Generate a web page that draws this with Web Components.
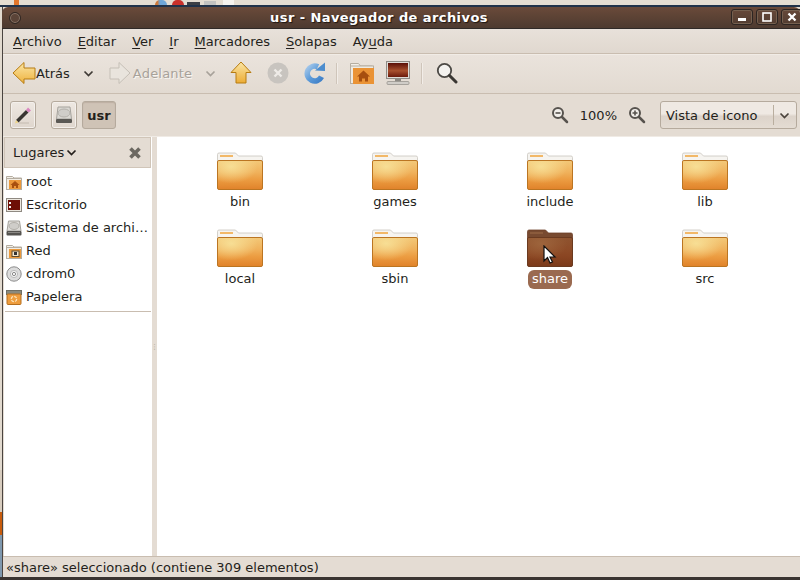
<!DOCTYPE html>
<html><head><meta charset="utf-8">
<style>
html,body{margin:0;padding:0;width:800px;height:580px;overflow:hidden;background:#e6ded6;font-family:"DejaVu Sans",sans-serif;font-size:13px;color:#241f1b}
</style></head><body>
<nau-app></nau-app>
<script>
const FOLDER=(sel)=>{
 const a=sel?['#8f5430','#8e4c28','#8a4522','#7a3a1a','#6a3a20']:['#f3c878','#f0b25c','#ec9d42','#e0822a','#bb7522'];
 const id=sel?'s':'n';
 return `<svg width="46" height="38" viewBox="0 0 46 38"><defs><linearGradient id="g${id}" x1="0" y1="0" x2="0" y2="1"><stop offset="0" stop-color="${a[0]}"/><stop offset=".4" stop-color="${a[1]}"/><stop offset=".65" stop-color="${a[2]}"/><stop offset="1" stop-color="${a[3]}"/></linearGradient><radialGradient id="h${id}" cx=".3" cy=".2" r=".6"><stop offset="0" stop-color="${sel?'#a0683f':'#f8e49c'}" stop-opacity=".85"/><stop offset="1" stop-color="${sel?'#a0683f':'#f8e49c'}" stop-opacity="0"/></radialGradient></defs>
 <path d="M.5 10V2.500q0-1.500 1.500-1.500H18.500l3 3H44q1.500 0 1.500 1.500V10z" fill="${sel?'#784a30':'#f6f4f0'}" stroke="${sel?'#6d4029':'#c9c5be'}" stroke-width=".8"/>
 <rect x="3" y="3" width="13" height="2" fill="${sel?'#8b5b3c':'#f2b868'}"/>
 <rect x=".5" y="8.500" width="45" height="29" rx="1.500" fill="url(#g${id})" stroke="${a[4]}"/>
 <rect x="1" y="9" width="44" height="28" fill="url(#h${id})"/></svg>`};
const mini=(c1,inner='')=>`<svg width="16" height="16" viewBox="0 0 16 16"><path d="M.5 4V2.500h6l1.500 1.500h7.500v3H.5z" fill="#f2efe8" stroke="#b5ada0"/><rect x=".5" y="4.500" width="15" height="11" fill="#f0ece4" stroke="#b5ada0"/><rect x="3" y="6" width="12" height="9" fill="${c1}"/>${inner}</svg>`;
const ICONS={
 root:mini('#ec9a3c','<path d="M9 7l4.500 4H12v3h-2v-2H8v2H6v-3H4.500z" fill="#a8500f"/>'),
 desk:`<svg width="16" height="16" viewBox="0 0 16 16"><rect x=".5" y="1.500" width="15" height="13" fill="#ece8e0" stroke="#8f8a82"/><rect x="2" y="3" width="12" height="10" fill="#6e0f06"/><rect x="3" y="5" width="2" height="2" fill="#eee"/><rect x="3" y="9" width="2" height="2" fill="#eee"/></svg>`,
 disk:`<svg width="16" height="16" viewBox="0 0 16 16"><path d="M2.500 1h11l1.500 10H1z" fill="#dedcd8" stroke="#a5a29c"/><ellipse cx="8" cy="6" rx="5" ry="3.500" fill="#cfcdc9" stroke="#b3b0aa"/><rect x=".5" y="11" width="15" height="4.500" rx="1" fill="#55534f"/><rect x="2" y="12" width="12" height="1" fill="#8b8985"/></svg>`,
 net:mini('#ec9a3c','<rect x="6" y="8" width="7" height="5.500" fill="#f4e7cf" stroke="#5e4a2c"/><rect x="8" y="9" width="3" height="3" fill="#333"/>'),
 cd:`<svg width="16" height="16" viewBox="0 0 16 16"><circle cx="8" cy="8" r="7.200" fill="#dcdcdc" stroke="#8c8c8c"/><circle cx="8" cy="8" r="3.600" fill="#f5f5f5" stroke="#bbb"/><circle cx="8" cy="8" r="1.600" fill="#fff" stroke="#888"/></svg>`,
 trash:`<svg width="16" height="16" viewBox="0 0 16 16"><rect x=".5" y="1.500" width="15" height="4" fill="#8a8a7e" stroke="#6e6e64"/><rect x="1" y="5" width="14" height="10.500" rx="1" fill="#ee9d3e" stroke="#b56f1f"/><circle cx="8" cy="10" r="2.700" fill="none" stroke="#fbe2b8" stroke-width="1.300" stroke-dasharray="3 1.200"/></svg>`
};
const ARR=`<svg width="11" height="7" viewBox="0 0 11 7"><path d="M1.500 1.500l4 4 4-4" fill="none" stroke="currentColor" stroke-width="1.700"/></svg>`;

function def(name,css,html){
 customElements.define(name,class extends HTMLElement{
  constructor(){super();const r=this.attachShadow({mode:'open'});
   r.innerHTML=`<style>${css}</style>`+(typeof html==='function'?html(this):html);}
 });
}

def('nau-titlebar',`
:host{display:flex;align-items:center;height:22px;box-sizing:border-box;background:linear-gradient(#6a4a3a,#5d4335 45%,#4d3a30);border-radius:6px 6px 0 0;border-bottom:1px solid #2f2a28;position:relative;flex:none;margin-left:-1px}
.dot{width:10px;height:10px;border-radius:50%;margin-left:7px;background:#5b4438;border:1px solid #2f2622;box-shadow:inset 0 0 0 1px #8a7668;flex:none}
.t{flex:1;text-align:center;font:bold 13px "DejaVu Sans",sans-serif;color:#fff;text-shadow:1px 1px 1px #1d1612;letter-spacing:.42px;margin-left:-7px;margin-right:56px;white-space:nowrap}
.b{display:flex;gap:3px;position:absolute;right:-3px;top:2px}
.b span{width:20px;height:14px;border:1px solid #2d2522;border-radius:3px;box-shadow:inset 0 0 0 1px #75604f;display:flex;align-items:center;justify-content:center}
`,`<div class="dot"></div><div class="t"><slot></slot></div><div class="b">
<span><svg width="10" height="10"><rect x="1" y="6" width="8" height="3" fill="#fff"/></svg></span>
<span><svg width="10" height="10"><rect x="1" y="1" width="8" height="8" fill="none" stroke="#fff" stroke-width="1.600"/></svg></span>
<span><svg width="10" height="10"><path d="M1.500 1.500l7 7M8.500 1.500l-7 7" stroke="#fff" stroke-width="2.300"/></svg></span></div>`);

def('nau-menubar',`
:host{display:flex;align-items:center;height:25px;box-sizing:border-box;padding:0 0 0 2px;background:linear-gradient(#e8e1da,#e0d8cf);border-bottom:1px solid #c9bdb0;flex:none}
`,`<slot></slot>`);
def('nau-menu',`:host{display:block;padding:0 8px}u{text-underline-offset:1.500px}`,
 el=>{const t=el.getAttribute('label'),k=+(el.getAttribute('k')||0);return `${t.slice(0,k)}<u>${t[k]}</u>${t.slice(k+1)}`});

def('nau-toolbar',`
:host{display:flex;align-items:center;height:40px;box-sizing:border-box;padding-bottom:2px;background:linear-gradient(#eae3dc,#e2dad1);border-top:1px solid #f1ece6;border-bottom:1px solid #c9bdb0;flex:none}
`,`<slot></slot>`);
def('nau-tool',`
:host{display:flex;align-items:center;flex:none}
:host([off]){color:#a8a29a;text-shadow:1px 1px 0 #f8f5f1}
`,`<slot></slot>`);
def('nau-sep',`:host{display:block;width:1px;height:21px;background:#cfc5ba;box-shadow:1px 0 0 #f2ede8;flex:none}`,``);

def('nau-pathbar',`
:host{display:flex;align-items:center;height:43px;background:#e4dcd3;border-bottom:1px solid #f0ebe5;flex:none;padding-left:7px;box-sizing:border-box}
`,`<slot></slot>`);
def('nau-btn',`
:host{display:flex;align-items:center;justify-content:center;height:26px;min-width:24px;border:1px solid #b5aa9d;border-radius:3px;background:linear-gradient(#eee8e2,#dfd6cd);box-shadow:inset 0 0 0 1px #f4f0ec;flex:none}
:host([on]){background:#cfc3b6;box-shadow:inset 0 1px 1px #bdb0a2;font-weight:bold;min-width:32px}
`,`<slot></slot>`);
def('nau-combo',`
:host{display:flex;align-items:center;width:135px;height:26px;border:1px solid #b5aa9d;border-radius:3px;background:linear-gradient(#efe9e3 45%,#dcd3ca 55%,#e4dcd3);box-sizing:content-box;flex:none;margin-right:3px}
.l{flex:1;padding-left:5px;white-space:nowrap}.a{width:21px;height:20px;border-left:1px solid #b9ae9f;display:flex;align-items:center;justify-content:center;color:#4a433c;margin-right:1px}
`,`<div class="l"><slot></slot></div><div class="a">${ARR}</div>`);

def('nau-sidebar',`
:host{display:flex;flex-direction:column;width:148px;flex:none;background:#fff;margin-left:1px;position:relative}
.h{display:flex;align-items:center;height:31px;box-sizing:border-box;background:#e4dcd3;border:1px solid #d0c5b8;padding:0 8px;flex:none;margin-bottom:2px;margin-right:1px}
.h span{display:flex;align-items:center;gap:2px}.x{margin-left:auto;display:flex}
.list{display:flex;flex-direction:column;padding-top:0;padding-bottom:3px;border-bottom:1px solid #c9bdb0;margin:0 0 0 1px;width:146px}
`,`<div class="h"><span>Lugares ${ARR}</span><svg class="x" width="14" height="14" viewBox="0 0 14 14"><path d="M2.500 2.500l9 9M11.500 2.500l-9 9" stroke="#6c6861" stroke-width="3.600"/></svg></div><div class="list"><slot></slot></div>`);
def('nau-place',`
:host{display:flex;align-items:center;height:23px;gap:4px;padding-left:1px;white-space:nowrap}
.i{display:flex;width:16px;flex:none}
`,el=>`<span class="i">${ICONS[el.getAttribute('icon')]}</span><slot></slot>`);

def('nau-folder',`
:host{display:flex;flex-direction:column;align-items:center;height:77px;box-sizing:border-box;padding-top:6px}
.i{display:flex;height:38px;position:relative}
.l{margin-top:3px;padding:0 4px 2px;line-height:17px;border-radius:6px;white-space:nowrap}
:host([sel]) .l{background:#9a6a50;color:#fff}
`,el=>`<div class="i">${FOLDER(el.hasAttribute('sel'))}</div><div class="l"><slot></slot></div>`);
def('nau-grid',`
:host{display:grid;grid-template-columns:repeat(4,155px);grid-auto-rows:77px;align-content:start;padding:9px 0 0 5.500px;flex:1;background:#fff;min-width:0;position:relative}
`,`<slot></slot>`);
def('nau-status',`
:host{display:flex;align-items:center;height:21px;box-sizing:border-box;flex:none;background:#e4dcd3;border-top:1px solid #c9bdb0;padding-left:3px}
`,`<slot></slot>`);

def('nau-app',`
:host{display:flex;flex-direction:column;width:800px;height:580px;background:#e4dcd3;overflow:hidden;position:relative}
.strip{height:7px;flex:none;position:relative;background:linear-gradient(#e4ddd2 0,#e4ddd2 5px,#20324a 5px,#20324a 7px);display:flex}
.strip i{position:absolute;top:0;height:5px;display:block}
.w{flex:1;display:flex;min-height:0}
.edge{width:2px;flex:none;background:linear-gradient(#e2dacf 0,#e2dacf 463px,#d8cdbf 463px,#d8cdbf 505px,#c95c0c 505px,#c95c0c 528px,#7f98ae 528px)}
.win{flex:1;display:flex;flex-direction:column;min-width:0;background:#e4dcd3;border-left:1px solid #4a4440}
.main{flex:1;display:flex;min-height:0;background:#e4dcd3}
.grip{width:5px;flex:none;display:flex;align-items:center;justify-content:center;color:#a79c90;font-size:7px}
.bot{height:3px;flex:none;background:#3a3431}
.cur{position:absolute;left:543px;top:245px;pointer-events:none}
.sp{display:block;flex:none}
`,`
<div class="strip">
<i style="left:14px;width:5px;background:#e2762b"></i><i style="left:155px;width:12px;background:linear-gradient(90deg,#d07a3a 20%,#6fa6d8 40%);border-radius:5px 5px 0 0"></i><i style="left:172px;width:12px;background:#c9312b;border-radius:6px 6px 0 0"></i><i style="left:187px;width:13px;top:2px;height:3px;background:#3c3f45"></i><i style="left:204px;width:12px;top:1px;height:4px;background:#c2c2c0"></i><i style="left:223px;width:11px;background:#f5f3ef"></i>
</div>
<div class="w"><div class="edge"></div><div class="win">
<nau-titlebar>usr - Navegador de archivos</nau-titlebar>
<nau-menubar>
<nau-menu label="Archivo"></nau-menu><nau-menu label="Editar"></nau-menu><nau-menu label="Ver"></nau-menu><nau-menu label="Ir"></nau-menu><nau-menu label="Marcadores"></nau-menu><nau-menu label="Solapas"></nau-menu><nau-menu label="Ayuda" k="2"></nau-menu>
</nau-menubar>
<nau-toolbar>
<span class="sp" style="width:9px"></span>
<nau-tool><svg width="24" height="24" viewBox="0 0 24 24"><defs><linearGradient id="ga" x1="0" y1="0" x2="0" y2="1"><stop offset="0" stop-color="#fbe6a6"/><stop offset="1" stop-color="#eeb23e"/></linearGradient></defs><path d="M1 12L12 1.500V7h11v11H12v4.500z" fill="url(#ga)" stroke="#b77c12"/></svg>Atrás</nau-tool>
<span class="sp" style="width:13px"></span>
<nau-tool style="color:#3f3a35">${ARR}</nau-tool>
<span class="sp" style="width:15px"></span>
<nau-tool off><svg width="22" height="24" viewBox="0 0 22 24"><path d="M21 12L10 1.500V7H1v11h9v4.500z" fill="#e9e4dd" stroke="#c5bfb6"/></svg><span style="margin-left:2px;letter-spacing:.2px">Adelante</span></nau-tool>
<span class="sp" style="width:13px"></span>
<nau-tool off>${ARR}</nau-tool>
<span class="sp" style="width:14px"></span>
<nau-tool><svg width="22" height="24" viewBox="0 0 22 24"><defs><linearGradient id="gu" x1="0" y1="0" x2="0" y2="1"><stop offset="0" stop-color="#fbe6a6"/><stop offset="1" stop-color="#ecac35"/></linearGradient></defs><path d="M11 1L21 11.500h-5V22H6V11.500H1z" fill="url(#gu)" stroke="#b77c12"/></svg></nau-tool>
<span class="sp" style="width:15px"></span>
<nau-tool><svg width="22" height="22" viewBox="0 0 22 22"><circle cx="11" cy="11" r="10.500" fill="#c8c4bf"/><path d="M7.500 7.500l7 7M14.500 7.500l-7 7" stroke="#eeebe7" stroke-width="2.400"/></svg></nau-tool>
<span class="sp" style="width:15px"></span>
<nau-tool><svg width="22" height="22" viewBox="0 0 22 22"><defs><linearGradient id="gr" x1="0" y1="0" x2="1" y2="1"><stop offset="0" stop-color="#a5c8ea"/><stop offset=".5" stop-color="#5d9bd9"/><stop offset="1" stop-color="#3f80c8"/></linearGradient></defs><path d="M17.500 14.800A7.500 7.500 0 1 1 14 4.800" fill="none" stroke="url(#gr)" stroke-width="5.500"/><path d="M11 8.500L21 9 21 .5z" fill="#4d8dce"/></svg></nau-tool>
<span class="sp" style="width:10px"></span>
<nau-sep></nau-sep>
<span class="sp" style="width:13px"></span>
<nau-tool><svg width="24" height="24" viewBox="0 0 24 24"><path d="M.5 5V2.500h8l2 2.500h12v3H.5z" fill="#f3efe8" stroke="#b5ada0"/><rect x=".5" y="5" width="23" height="17.500" fill="#eeeae2" stroke="#b5ada0"/><rect x="3" y="7" width="21" height="16" fill="#ea9335"/><path d="M13.500 9.500l6.500 6H18v5h-3v-3h-3v3H9v-5H7z" fill="#a64f0f"/></svg></nau-tool>
<span class="sp" style="width:12px"></span>
<nau-tool><svg width="24" height="24" viewBox="0 0 24 24"><defs><linearGradient id="gd" x1="0" y1="0" x2="0" y2="1"><stop offset="0" stop-color="#5a0f07"/><stop offset=".55" stop-color="#a8502e"/><stop offset="1" stop-color="#6b1a0c"/></linearGradient></defs><rect x=".5" y=".5" width="23" height="17" fill="#dedbd6" stroke="#8f8c86"/><rect x="2" y="2" width="20" height="14" fill="url(#gd)"/><rect x="9" y="17.500" width="6" height="3" fill="#8d8a84"/><rect x="1" y="20.500" width="22" height="3" rx="1" fill="#d0cdc8" stroke="#8f8c86" stroke-width=".7"/></svg></nau-tool>
<span class="sp" style="width:11px"></span>
<nau-sep></nau-sep>
<span class="sp" style="width:14px"></span>
<nau-tool><svg width="22" height="22" viewBox="0 0 22 22"><circle cx="8.500" cy="8.500" r="6.700" fill="#f4f2ef" stroke="#4c4945" stroke-width="1.800"/><path d="M13.500 13.500l6.500 6.500" stroke="#3a3733" stroke-width="3" stroke-linecap="round"/></svg></nau-tool>
</nau-toolbar>
<nau-pathbar>
<nau-btn style="width:24px"><svg width="20" height="20" viewBox="0 0 20 20"><path d="M3 15l10-10 2.500 2.500-10 10z" fill="#2f2c29" opacity=".95"/><path d="M13 5l2-2.500 3 3-2.500 2z" fill="#d987c0"/><path d="M3 15l-1 3.500 3.500-1z" fill="#eed58a"/><path d="M6 18h10" stroke="#c4bbb0" stroke-width="1"/></svg></nau-btn>
<span class="sp" style="width:15px"></span>
<nau-btn style="width:24px"><svg width="20" height="20" viewBox="0 0 20 20"><path d="M4 2h12l1.500 12h-15z" fill="#dad8d3" stroke="#a5a29c"/><ellipse cx="10" cy="8" rx="6" ry="4" fill="#cfcdc9" stroke="#b3b0aa"/><rect x="2" y="14" width="16" height="4" rx="1" fill="#5a5854"/></svg></nau-btn>
<span class="sp" style="width:5px"></span>
<nau-btn on style="width:32px">usr</nau-btn>
<span style="flex:1"></span>
<svg width="18" height="18" viewBox="0 0 18 18" style="flex:none"><circle cx="7" cy="7" r="5" fill="#f2efea" stroke="#57534e" stroke-width="2"/><path d="M4.500 7h5" stroke="#57534e" stroke-width="1.600"/><path d="M11 11l5 5" stroke="#57534e" stroke-width="2.500" stroke-linecap="round"/></svg>
<span class="sp" style="width:11px"></span><span style="flex:none">100%</span><span class="sp" style="width:11px"></span>
<svg width="18" height="18" viewBox="0 0 18 18" style="flex:none"><circle cx="7" cy="7" r="5" fill="#f2efea" stroke="#57534e" stroke-width="2"/><path d="M4.500 7h5M7 4.500v5" stroke="#57534e" stroke-width="1.600"/><path d="M11 11l5 5" stroke="#57534e" stroke-width="2.500" stroke-linecap="round"/></svg>
<span class="sp" style="width:14px"></span>
<nau-combo>Vista de icono</nau-combo>
</nau-pathbar>
<div class="main">
<nau-sidebar>
<nau-place icon="root">root</nau-place><nau-place icon="desk">Escritorio</nau-place><nau-place icon="disk">Sistema de archi…</nau-place><nau-place icon="net">Red</nau-place><nau-place icon="cd">cdrom0</nau-place><nau-place icon="trash">Papelera</nau-place>
</nau-sidebar>
<div class="grip">⋮</div>
<nau-grid>
<nau-folder>bin</nau-folder><nau-folder>games</nau-folder><nau-folder>include</nau-folder><nau-folder>lib</nau-folder>
<nau-folder>local</nau-folder><nau-folder>sbin</nau-folder><nau-folder sel>share</nau-folder><nau-folder>src</nau-folder>
</nau-grid>
</div>
<nau-status>«share» seleccionado (contiene 309 elementos)</nau-status>
</div></div>
<div class="bot"></div>
<svg class="cur" width="14" height="20" viewBox="0 0 14 20"><path d="M1 1v15l3.500-3.500L7 18l2.500-1-2.500-5h5z" fill="#fff" stroke="#111" stroke-width="1.200"/></svg>
`);
</script>
</body></html>
